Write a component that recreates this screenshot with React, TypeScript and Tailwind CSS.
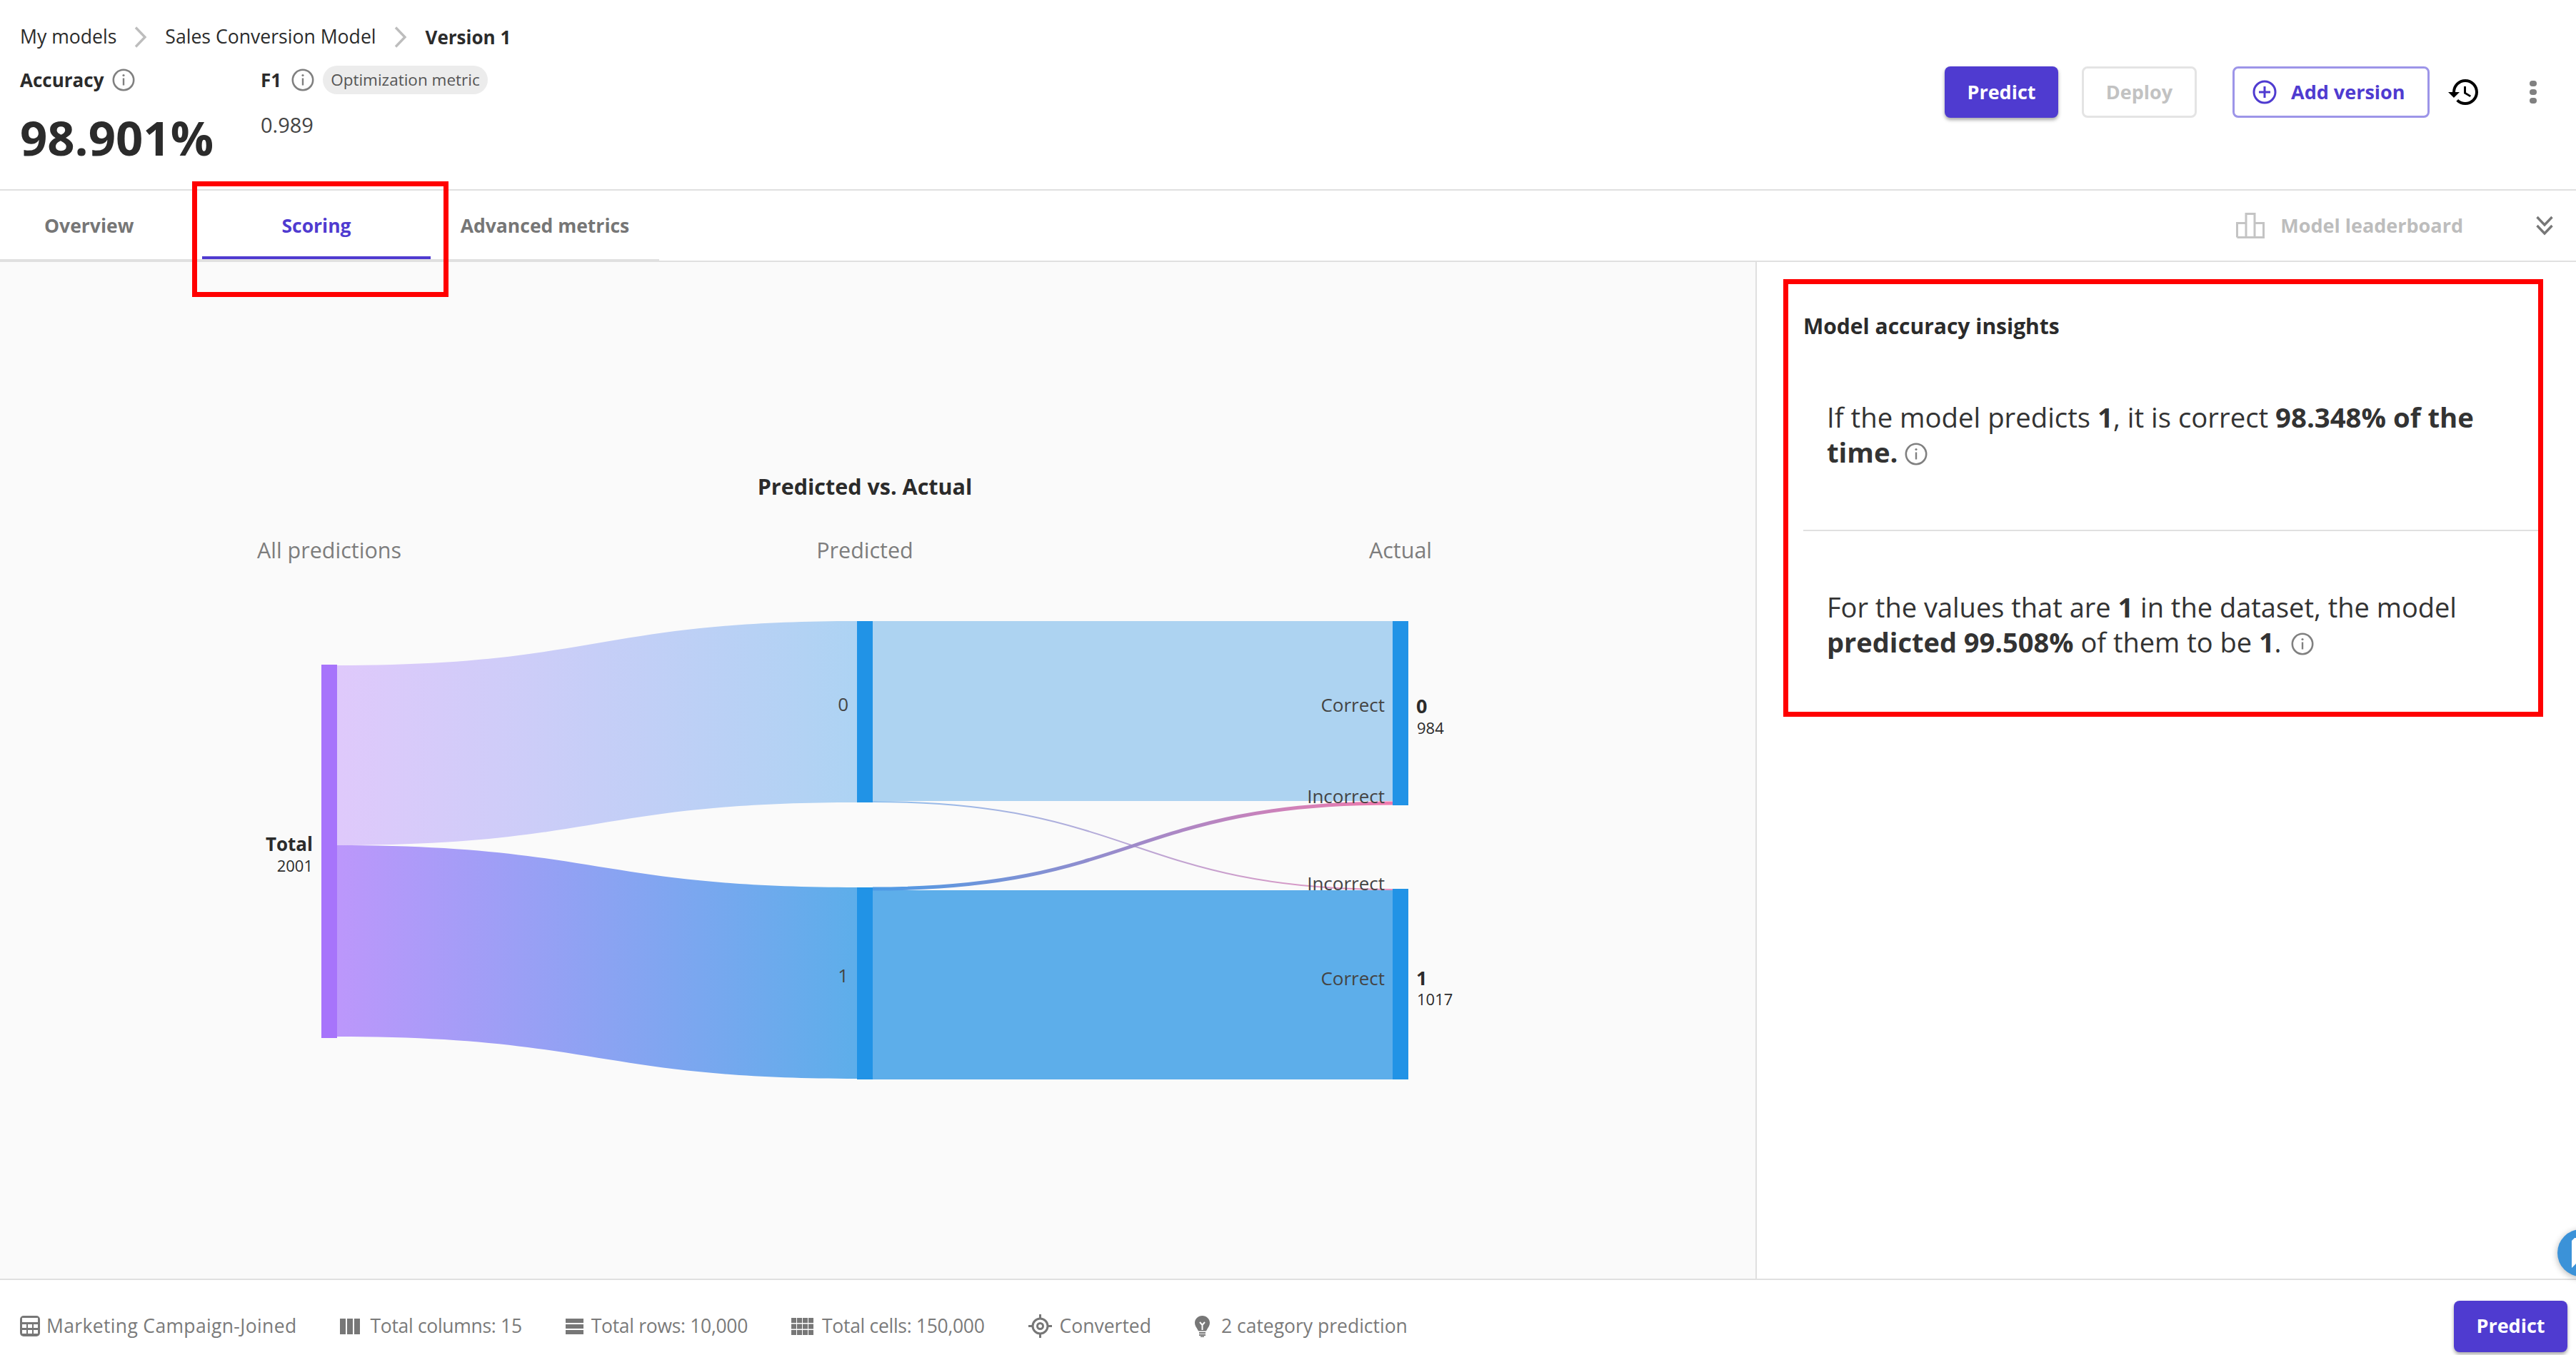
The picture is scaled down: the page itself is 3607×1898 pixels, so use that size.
import { MdHistory } from "react-icons/md";

const Info = ({ size = 32 }: { size?: number }) => (
  <svg width={size} height={size} viewBox="0 0 32 32" fill="none" className="shrink-0 inline-block">
    <circle cx="16" cy="16" r="14.2" stroke="#808080" strokeWidth="2.6" />
    <circle cx="16" cy="9.5" r="1.6" fill="#808080" />
    <rect x="14.8" y="13.5" width="2.4" height="10" fill="#808080" />
  </svg>
);

const Crumb = () => (
  <svg width="18" height="30" viewBox="0 0 18 30" fill="none" className="shrink-0">
    <path d="M2 1.5 L15 15 L2 28.5" stroke="#bdbdbd" strokeWidth="3.4" />
  </svg>
);

const FootText = ({ children, className = "" }: { children: React.ReactNode; className?: string }) => (
  <span className={`text-[26.500px] text-[#7a7a7a] whitespace-nowrap ${className}`}>{children}</span>
);

function Sankey() {
  return (
    <svg width="2250" height="770" viewBox="86 790 2250 770" className="block">
      <defs>
        <linearGradient id="flowTop" gradientUnits="userSpaceOnUse" x1="472" y1="0" x2="1200" y2="0">
          <stop offset="0" stopColor="#dfc9fb" />
          <stop offset="1" stopColor="#add3f3" />
        </linearGradient>
        <linearGradient id="flowBottom" gradientUnits="userSpaceOnUse" x1="472" y1="0" x2="1200" y2="0">
          <stop offset="0" stopColor="#bc97fb" />
          <stop offset="1" stopColor="#5daeea" />
        </linearGradient>
        <linearGradient id="crossThin" gradientUnits="userSpaceOnUse" x1="1222" y1="0" x2="1950" y2="0">
          <stop offset="0" stopColor="#8fc0ee" />
          <stop offset="1" stopColor="#e58fbd" />
        </linearGradient>
        <linearGradient id="crossThick" gradientUnits="userSpaceOnUse" x1="1222" y1="0" x2="1950" y2="0">
          <stop offset="0" stopColor="#4c9be6" />
          <stop offset="1" stopColor="#f07aad" />
        </linearGradient>
      </defs>

      <path d="M472 932 C836 932 836 870 1200 870 L1200 1124 C836 1124 836 1184 472 1184 Z" fill="url(#flowTop)" />
      <path d="M472 1184 C836 1184 836 1243 1200 1243 L1200 1511 C836 1511 836 1452 472 1452 Z" fill="url(#flowBottom)" />
      <rect x="1222" y="870" width="728" height="252" fill="#add3f1" />
      <rect x="1222" y="1247" width="728" height="265" fill="#5daeea" />
      <path d="M1222 1123 C1586 1123 1586 1246 1950 1246" fill="none" stroke="url(#crossThin)" strokeWidth="2" />
      <path d="M1222 1245 C1586 1245 1586 1125 1950 1125" fill="none" stroke="url(#crossThick)" strokeWidth="5" />

      <rect x="450" y="931" width="22" height="523" fill="#a774fb" />
      <rect x="1200" y="870" width="22" height="254" fill="#2193e6" />
      <rect x="1200" y="1243" width="22" height="269" fill="#2193e6" />
      <rect x="1950" y="870" width="22" height="258" fill="#2193e6" />
      <rect x="1950" y="1245" width="22" height="267" fill="#2193e6" />

      <g className="text-[26px] fill-[#444444]" textAnchor="end" dominantBaseline="central">
        <text x="1188" y="986">0</text>
        <text x="1188" y="1366">1</text>
        <text x="1939" y="987">Correct</text>
        <text x="1939" y="1115">Incorrect</text>
        <text x="1939" y="1237">Incorrect</text>
        <text x="1939" y="1370">Correct</text>
      </g>
      <g dominantBaseline="central" className="fill-[#2b2b2b]">
        <text x="438" y="1182" textAnchor="end" className="text-[26px] font-bold">Total</text>
        <text x="438" y="1212" textAnchor="end" className="text-[22px]">2001</text>
        <text x="1983" y="988" className="text-[27px] font-bold">0</text>
        <text x="1984" y="1019" className="text-[22px]">984</text>
        <text x="1983" y="1369" className="text-[27px] font-bold">1</text>
        <text x="1984" y="1399" className="text-[22px]">1017</text>
      </g>
    </svg>
  );
}

export default function App() {
  return (
    <div className="relative flex flex-col w-[3607px] h-[1898px] overflow-hidden bg-white text-[#2b2b2b] font-['Open_Sans',sans-serif]">
      {/* Header */}
      <header className="flex justify-between h-[267px] shrink-0 border-b-2 border-[#e0e0e0]">
        <div className="pl-[28px] pt-[34px]">
          <nav className="flex items-center h-[36px] text-[26.600px] whitespace-nowrap">
            <span>My models</span>
            <span className="ml-[25px] mr-[25px]"><Crumb /></span>
            <span>Sales Conversion Model</span>
            <span className="ml-[25px] mr-[26px]"><Crumb /></span>
            <span className="text-[26px] font-bold">Version 1</span>
          </nav>
          <div className="flex mt-[22px]">
            <div className="w-[337px]">
              <div className="flex items-center gap-[12px] h-[40px]">
                <span className="text-[26px] font-bold">Accuracy</span>
                <Info />
              </div>
              <div className="mt-[28px] text-[67px] leading-[64px] font-bold">98.901%</div>
            </div>
            <div>
              <div className="flex items-center h-[40px]">
                <span className="text-[26px] font-bold">F1</span>
                <span className="ml-[14px] mr-[12px]"><Info /></span>
                <span className="flex items-center h-[40px] px-[11px] rounded-[20px] bg-[#ececec] text-[22.500px] text-[#555555] whitespace-nowrap">
                  Optimization metric
                </span>
              </div>
              <div className="mt-[20px] text-[29px] leading-[46px] text-[#444444]">0.989</div>
            </div>
          </div>
        </div>

        <div className="flex items-center h-[72px] mt-[93px] pr-[55px]">
          <button type="button" className="w-[159px] h-[72px] rounded-[8px] bg-[#4f3bd0] text-[27px] font-bold text-white shadow-[0_3px_5px_rgba(0,0,0,0.35)]">
            Predict
          </button>
          <button type="button" className="w-[161px] h-[72px] ml-[33px] rounded-[8px] border-[3px] border-[#e4e4e4] text-[27px] font-bold text-[#c2c2c2]">
            Deploy
          </button>
          <button type="button" className="flex items-center w-[276px] h-[72px] ml-[50px] pl-[25px] rounded-[8px] border-[3px] border-[#9d95e8] text-[27px] font-bold text-[#4f3bd0] whitespace-nowrap">
            <svg width="34" height="34" viewBox="0 0 34 34" fill="none" className="shrink-0 mr-[20px]">
              <circle cx="17" cy="17" r="15" stroke="#4f3bd0" strokeWidth="3" />
              <path d="M17 9 V25 M9 17 H25" stroke="#4f3bd0" strokeWidth="3" />
            </svg>
            Add version
          </button>
          <MdHistory className="w-[48px] h-[48px] ml-[24px] text-black shrink-0" />
          <div className="flex flex-col gap-[4px] ml-[68px] shrink-0">
            <span className="w-[10px] h-[8px] rounded-full bg-[#808080]" />
            <span className="w-[10px] h-[8px] rounded-full bg-[#808080]" />
            <span className="w-[10px] h-[8px] rounded-full bg-[#808080]" />
          </div>
        </div>
      </header>

      {/* Tabs */}
      <div className="flex justify-between items-stretch h-[100px] shrink-0 border-b-2 border-[#e0e0e0]">
        <div className="flex w-[923px] border-b-2 border-[#e0e0e0] text-[26.500px] font-bold text-[#767676]">
          <button type="button" className="w-[283px] pl-[62px] pt-[4px] text-left">Overview</button>
          <button type="button" className="w-[320px] pt-[8px] border-b-4 border-[#4f3bd0] text-[#4f3bd0]">Scoring</button>
          <button type="button" className="w-[320px] pt-[4px]">Advanced metrics</button>
        </div>
        <div className="flex items-center pr-[32px]">
          <svg width="40" height="36" viewBox="0 0 40 36" fill="none" className="shrink-0 mr-[22px]">
            <path d="M1.500 34.500 V14.500 H14 V1.500 H26 V34.500 M14 14.500 V34.500 M26 14.500 H38.500 V34.500 H1.500" stroke="#c4c4c4" strokeWidth="3" />
          </svg>
          <span className="text-[27px] font-bold text-[#bdbdbd] whitespace-nowrap">Model leaderboard</span>
          <svg width="24" height="28" viewBox="0 0 24 28" fill="none" className="shrink-0 ml-[102px]">
            <path d="M1.500 2 L12 13 L22.500 2 M1.500 14 L12 25 L22.500 14" stroke="#777777" strokeWidth="3.400" />
          </svg>
        </div>
      </div>

      {/* Main */}
      <main className="flex flex-1 min-h-0">
        <section className="w-[2460px] shrink-0 bg-[#fafafa] border-r-2 border-[#e0e0e0] pl-[86px] pt-[294px]">
          <div className="w-[2250px]">
            <h2 className="text-[30.500px] leading-[40px] font-bold text-center">Predicted vs. Actual</h2>
            <div className="grid grid-cols-3 mt-[49px] text-[30.500px] leading-[40px] text-center text-[#7d7d7d]">
              <span>All predictions</span>
              <span>Predicted</span>
              <span>Actual</span>
            </div>
            <Sankey />
          </div>
        </section>

        <aside className="flex-1 min-w-0 pl-[37px] pt-[24px]">
          <div className="w-[1064px] h-[613px] border-[7px] border-[#ff0000] pl-[21px] pt-[39px]">
            <h3 className="text-[30px] leading-[40px] font-bold whitespace-nowrap">Model accuracy insights</h3>
            <div className="mt-[84px] pl-[33px] pr-[40px] h-[181px] text-[38.300px] leading-[47px] text-[#333333]">
              <p>
                If the model predicts <b className="font-bold">1</b>, it is correct{" "}
                <b className="font-bold">98.348% of the time.</b>{" "}
                <span className="inline-block align-[2px]"><Info /></span>
              </p>
            </div>
            <div className="border-t-2 border-[#e0e0e0]" />
            <div className="mt-[83px] pl-[33px] pr-[40px] text-[38px] leading-[47px] text-[#333333]">
              <p>
                For the values that are <b className="font-bold">1</b> in the dataset, the model{" "}
                <b className="font-bold">predicted 99.508%</b> of them to be <b className="font-bold">1</b>.{" "}
                <span className="inline-block align-[2px] ml-[4px]"><Info /></span>
              </p>
            </div>
          </div>
        </aside>
      </main>

      {/* Footer */}
      <footer className="flex justify-between items-center h-[107px] shrink-0 border-t-2 border-[#e0e0e0] pt-[24px] pl-[28px] pr-[12px]">
        <div className="flex items-center gap-[61px]">
          <div className="flex items-center gap-[9px]">
            <svg width="28" height="29" viewBox="0 0 28 29" className="shrink-0">
              <rect width="28" height="29" rx="5" fill="#777777" />
              <rect x="3" y="3" width="22" height="6" fill="#ffffff" />
              <path d="M3 12h6v5H3zM11 12h6v5h-6zM19 12h6v5h-6zM3 20h6v5H3zM11 20h6v5h-6zM19 20h6v5h-6z" fill="#ffffff" />
            </svg>
            <FootText className="tracking-[0.35px]">Marketing Campaign-Joined</FootText>
          </div>
          <div className="flex items-center gap-[14px]">
            <svg width="28" height="22" viewBox="0 0 28 22" className="shrink-0">
              <path d="M0 0h8v22H0zM10 0h8v22h-8zM20 0h8v22h-8z" fill="#777777" />
            </svg>
            <FootText className="tracking-[-0.3px]">Total columns: 15</FootText>
          </div>
          <div className="flex items-center gap-[11px]">
            <svg width="25" height="22" viewBox="0 0 25 22" className="shrink-0">
              <path d="M0 0h25v6H0zM0 8h25v6H0zM0 16h25v6H0z" fill="#777777" />
            </svg>
            <FootText className="tracking-[-0.3px]">Total rows: 10,000</FootText>
          </div>
          <div className="flex items-center gap-[12px]">
            <svg width="31" height="24" viewBox="0 0 31 24" className="shrink-0">
              <path d="M0 0h7v7H0zM8 0h7v7H8zM16 0h7v7h-7zM24 0h7v7h-7zM0 8.500h7v7H0zM8 8.500h7v7H8zM16 8.500h7v7h-7zM24 8.500h7v7h-7zM0 17h7v7H0zM8 17h7v7H8zM16 17h7v7h-7zM24 17h7v7h-7z" fill="#777777" />
            </svg>
            <FootText className="tracking-[-0.3px]">Total cells: 150,000</FootText>
          </div>
          <div className="flex items-center gap-[11px]">
            <svg width="33" height="33" viewBox="0 0 33 33" fill="none" className="shrink-0">
              <circle cx="16.500" cy="16.500" r="10.500" stroke="#777777" strokeWidth="3" />
              <circle cx="16.500" cy="16.500" r="4" stroke="#777777" strokeWidth="3" />
              <path d="M16.500 0v6M16.500 27v6M0 16.500h6M27 16.500h6" stroke="#777777" strokeWidth="3" />
            </svg>
            <FootText>Converted</FootText>
          </div>
          <div className="flex items-center gap-[16px]">
            <svg width="21" height="30" viewBox="0 0 21 30" className="shrink-0">
              <path d="M10.500 0C4.500 0 0 4.500 0 10c0 4 2.500 6.500 4 9.500 .5 1 .8 1.500 1.500 2h10c.7-.5 1-1 1.500-2 1.500-3 4-5.500 4-9.500C21 4.500 16.500 0 10.500 0Z" fill="#777777" />
              <path d="M6 23h9v2H6zM6 26h9v2H6zM8 28.500h5V30H8z" fill="#777777" />
              <path d="M7 9l3.500 4L14 9M10.500 13v7" stroke="#ffffff" strokeWidth="2" fill="none" />
            </svg>
            <FootText>2 category prediction</FootText>
          </div>
        </div>
        <button type="button" className="w-[159px] h-[72px] rounded-[8px] bg-[#4f3bd0] text-[27px] font-bold text-white shadow-[0_3px_5px_rgba(0,0,0,0.35)]">
          Predict
        </button>
      </footer>

      {/* Red annotation around the Scoring tab */}
      <div className="absolute left-[269px] top-[254px] w-[359px] h-[162px] border-[7px] border-[#ff0000] pointer-events-none" />

      {/* Chat bubble, cut off by the window edge */}
      <div className="absolute left-[3581px] top-[1722px] w-[66px] h-[66px] rounded-full bg-[#3b92d8] shadow-[0_2px_10px_rgba(0,0,0,0.3)] overflow-hidden">
        <svg width="30" height="42" viewBox="0 0 30 42" className="ml-[20px] mt-[12px]">
          <path d="M4 0H30V28H14L0 42V4Z" fill="#ffffff" />
        </svg>
      </div>
    </div>
  );
}
